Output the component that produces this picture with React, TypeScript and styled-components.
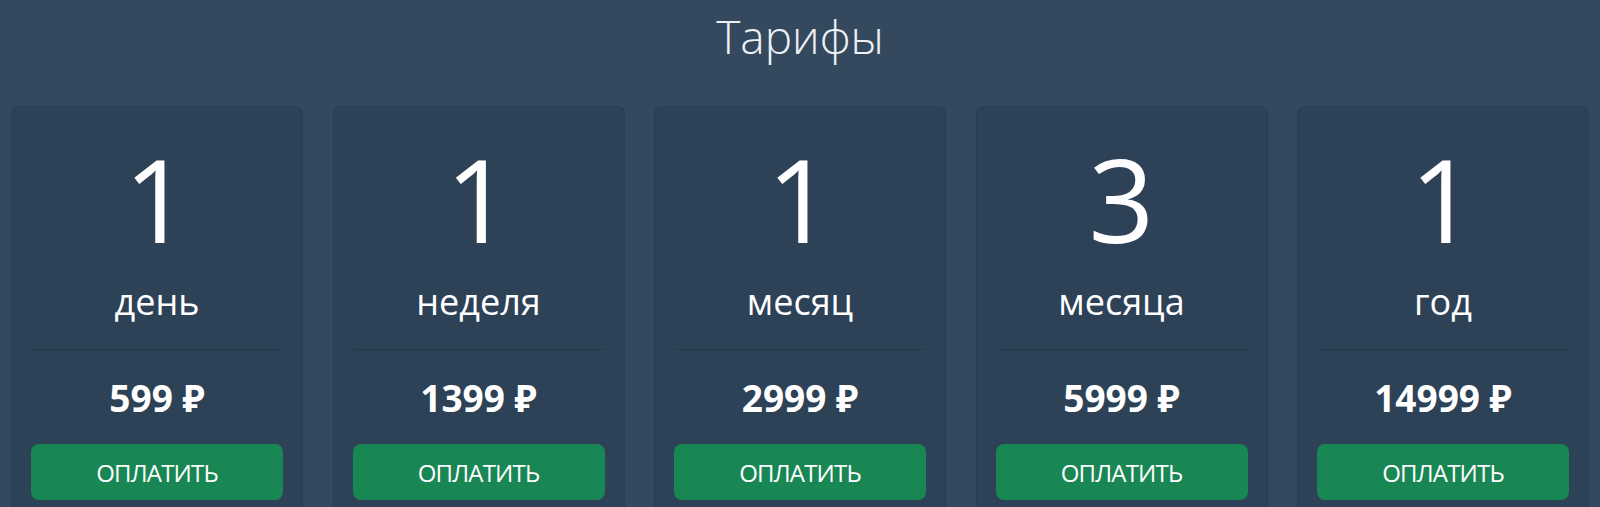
import React from 'react';
import styled, { createGlobalStyle } from 'styled-components';

const GlobalStyle = createGlobalStyle`
  html, body {
    margin: 0;
    padding: 0;
    background-color: #34495e;
  }
  body {
    font-family: "Open Sans", "Noto Sans", sans-serif;
    color: #fff;
  }
`;

const Page = styled.div`
  min-height: 100vh;
  background-color: #34495e;
  overflow: hidden;
`;

const Title = styled.h1`
  margin: 13px 0 47px;
  font-size: 46px;
  line-height: 1;
  font-weight: 300;
  text-align: center;
  color: #eef1f4;
`;

const PlansRow = styled.div`
  display: flex;
  gap: 29.5px;
  padding: 0 11px;
`;

const PlanCard = styled.div`
  flex: 1;
  display: flex;
  flex-direction: column;
  align-items: stretch;
  padding: 34px 19px 20px;
  background-color: #2d4157;
  border: 1px solid rgba(0, 0, 0, 0.06);
  border-radius: 8px;
`;

const Amount = styled.div`
  font-size: 115px;
  line-height: 1;
  font-weight: 400;
  text-align: center;
`;

const Unit = styled.div`
  margin-top: 28px;
  font-size: 36px;
  line-height: 1;
  text-align: center;
`;

const Divider = styled.hr`
  margin: 29px 0 0;
  border: 0;
  border-top: 1px solid rgba(0, 0, 0, 0.15);
`;

const Price = styled.div`
  margin-top: 29px;
  font-size: 37px;
  line-height: 1;
  font-weight: 700;
  text-align: center;
`;

const PayButton = styled.button`
  margin-top: 28px;
  height: 56px;
  border: 0;
  border-radius: 8px;
  background-color: #198754;
  color: #fff;
  font-family: inherit;
  font-size: 24px;
  letter-spacing: -0.8px;
  text-transform: uppercase;
  cursor: pointer;
`;

interface Plan {
  amount: number;
  unit: string;
  price: number;
}

const plans: Plan[] = [
  { amount: 1, unit: 'день', price: 599 },
  { amount: 1, unit: 'неделя', price: 1399 },
  { amount: 1, unit: 'месяц', price: 2999 },
  { amount: 3, unit: 'месяца', price: 5999 },
  { amount: 1, unit: 'год', price: 14999 },
];

export default function App() {
  return (
    <Page>
      <GlobalStyle />
      <Title>Тарифы</Title>
      <PlansRow>
        {plans.map((plan) => (
          <PlanCard key={plan.unit}>
            <Amount>{plan.amount}</Amount>
            <Unit>{plan.unit}</Unit>
            <Divider />
            <Price>{plan.price} ₽</Price>
            <PayButton>Оплатить</PayButton>
          </PlanCard>
        ))}
      </PlansRow>
    </Page>
  );
}
